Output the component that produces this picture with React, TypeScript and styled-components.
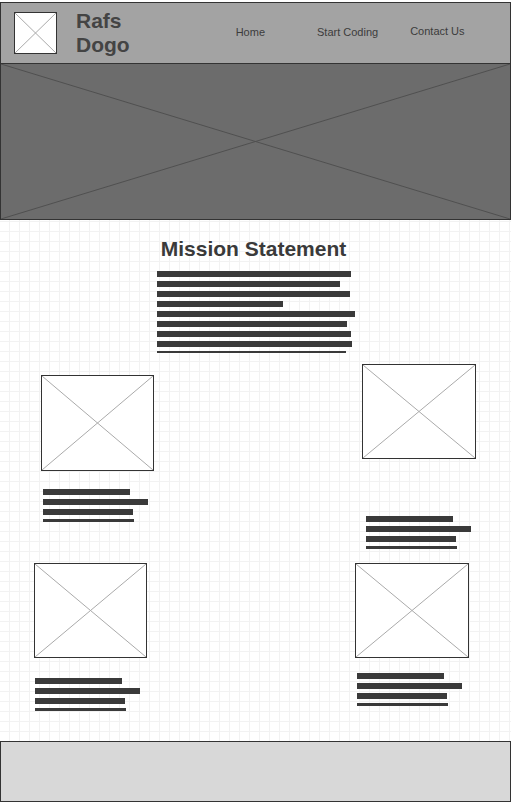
import React from "react";
import styled, { createGlobalStyle } from "styled-components";

const Global = createGlobalStyle`
  * { box-sizing: border-box; }
  html, body { margin: 0; padding: 0; background: #fff; }
  body { font-family: "Liberation Sans", Arial, sans-serif; }
`;

const Page = styled.div`
  width: 511px;
  padding-top: 2px;
  display: flex;
  flex-direction: column;
`;

const Header = styled.header`
  height: 62px;
  background: #a3a3a3;
  border: 1px solid #333;
  display: flex;
  align-items: flex-start;
  padding: 9px 0 0 13px;
`;

const Placeholder = styled.div<{ $w: number; $h: number }>`
  width: ${(p) => p.$w}px;
  height: ${(p) => p.$h}px;
  background: #fff;
  border: 1px solid #333;
  flex-shrink: 0;
  svg { display: block; width: 100%; height: 100%; }
`;

const Brand = styled.div`
  margin: -3px 0 0 19px;
  font-size: 21px;
  line-height: 24px;
  font-weight: bold;
  color: #444;
`;

const Nav = styled.nav`
  display: flex;
  align-items: flex-start;
  margin-left: 106px;
`;

const NavLink = styled.a<{ $dx: number; $dy: number }>`
  margin-left: ${(p) => p.$dx}px;
  margin-top: ${(p) => p.$dy}px;
  font-size: 11px;
  line-height: 13px;
  color: #3c3c3c;
  text-decoration: none;
  white-space: nowrap;
`;

const Hero = styled.section`
  height: 156px;
  background: #6c6c6c;
  border: 1px solid #333;
  border-top: none;
  svg { display: block; width: 100%; height: 100%; }
`;

const Main = styled.main`
  height: 521px;
  background-color: #fff;
  background-image:
    linear-gradient(to right, #f2f2f2 1px, transparent 1px),
    linear-gradient(to bottom, #f2f2f2 1px, transparent 1px);
  background-size: 10px 10px;
  background-position: 9px 1px;
  padding-top: 16px;
  display: flex;
  flex-direction: column;
`;

const Heading = styled.h1`
  margin: 0;
  padding-right: 4px;
  text-align: center;
  font-size: 21px;
  line-height: 25px;
  font-weight: bold;
  color: #3a3a3a;
`;

const Lines = styled.div<{ $x?: number }>`
  display: flex;
  flex-direction: column;
  align-items: flex-start;
  gap: 4px;
  margin-left: ${(p) => p.$x ?? 0}px;
`;

const Bar = styled.div<{ $w: number; $h?: number }>`
  width: ${(p) => p.$w}px;
  height: ${(p) => p.$h ?? 6}px;
  background: #3a3a3a;
`;

const MissionLines = styled(Lines)`
  align-self: center;
  width: 198px;
  margin-top: 10px;
`;

const Row = styled.div<{ $top: number }>`
  display: flex;
  align-items: flex-start;
  margin-top: ${(p) => p.$top}px;
`;

const Card = styled.article<{ $x: number; $y: number; $gap: number }>`
  display: flex;
  flex-direction: column;
  margin-left: ${(p) => p.$x}px;
  margin-top: ${(p) => p.$y}px;
  gap: ${(p) => p.$gap}px;
`;

const Footer = styled.footer`
  height: 61px;
  background: #d8d8d8;
  border: 1px solid #333;
`;

const Cross = ({ color }: { color: string }) => (
  <svg viewBox="0 0 100 100" preserveAspectRatio="none">
    <line x1="0" y1="0" x2="100" y2="100" stroke={color} strokeWidth="1" vectorEffect="non-scaling-stroke" />
    <line x1="100" y1="0" x2="0" y2="100" stroke={color} strokeWidth="1" vectorEffect="non-scaling-stroke" />
  </svg>
);

const mission = [194, 183, 193, 126, 198, 190, 194, 195];

type CardData = { x: number; y: number; gap: number; w: number; h: number; bx: number };

const TeaserCard = ({ c }: { c: CardData }) => (
  <Card $x={c.x} $y={c.y} $gap={c.gap}>
    <Placeholder $w={c.w} $h={c.h}>
      <Cross color="#aaa" />
    </Placeholder>
    <Lines $x={c.bx}>
      <Bar $w={87} />
      <Bar $w={105} />
      <Bar $w={90} />
      <Bar $w={91} $h={3} />
    </Lines>
  </Card>
);

export default function App() {
  return (
    <>
      <Global />
      <Page>
        <Header>
          <Placeholder $w={43} $h={42}>
            <Cross color="#aaa" />
          </Placeholder>
          <Brand>
            Rafs
            <br />
            Dogo
          </Brand>
          <Nav>
            <NavLink href="#" $dx={0} $dy={14}>Home</NavLink>
            <NavLink href="#" $dx={52} $dy={14}>Start Coding</NavLink>
            <NavLink href="#" $dx={32} $dy={13}>Contact Us</NavLink>
          </Nav>
        </Header>
        <Hero>
          <Cross color="#505050" />
        </Hero>
        <Main>
          <Heading>Mission Statement</Heading>
          <MissionLines>
            {mission.map((w, i) => (
              <Bar key={i} $w={w} />
            ))}
            <Bar $w={189} $h={2} />
          </MissionLines>
          <Row $top={0}>
            <TeaserCard c={{ x: 41, y: 22, gap: 18, w: 113, h: 96, bx: 2 }} />
            <TeaserCard c={{ x: 208, y: 11, gap: 57, w: 114, h: 95, bx: 4 }} />
          </Row>
          <Row $top={14}>
            <TeaserCard c={{ x: 34, y: 0, gap: 20, w: 113, h: 95, bx: 1 }} />
            <TeaserCard c={{ x: 208, y: 0, gap: 15, w: 114, h: 95, bx: 2 }} />
          </Row>
        </Main>
        <Footer />
      </Page>
    </>
  );
}
